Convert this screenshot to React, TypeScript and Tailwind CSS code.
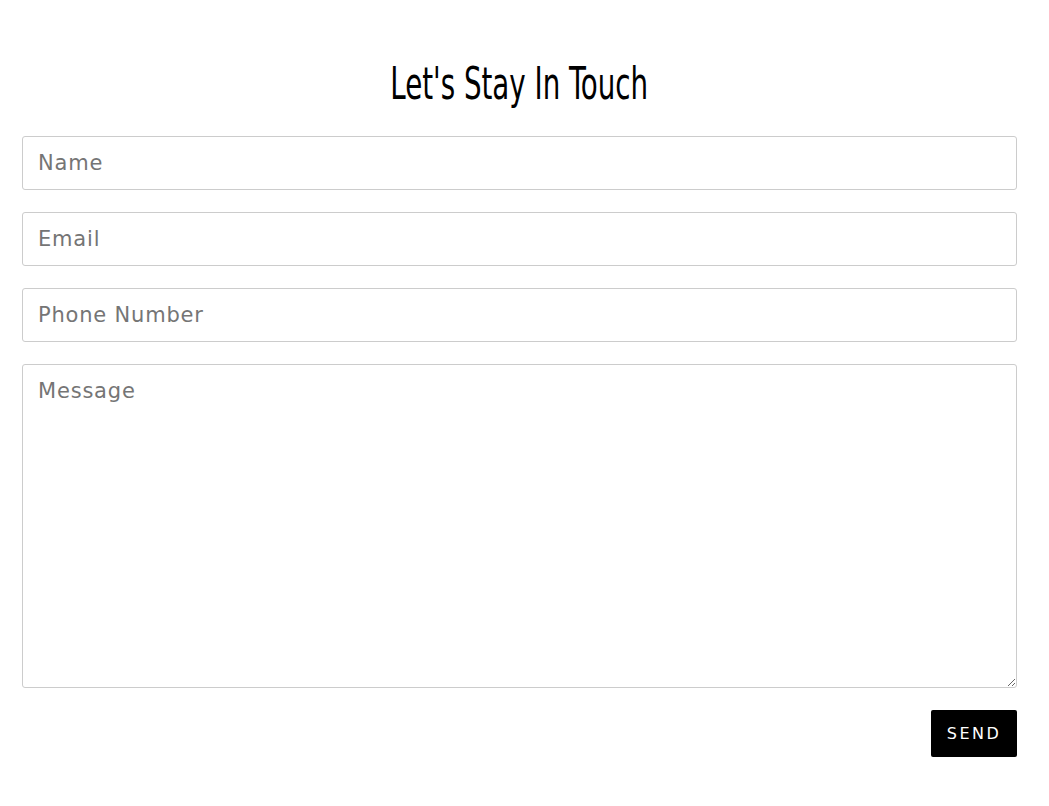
const fieldClass =
  "w-full h-[54px] rounded-[3px] border border-[#cccccc] bg-white px-[15px] text-[21px] tracking-[0.8px] text-[#333] placeholder:text-[#757575] outline-none";

export default function App() {
  return (
    <section className="min-h-[806px] bg-white pl-[22px] pr-[32px] pt-[60px]" style={{ fontFamily: "'DejaVu Sans', sans-serif" }}>
      <div className="mb-[28px] flex justify-center">
        <h2
          className="inline-block scale-x-[0.7] text-[44px] leading-[48px] text-black"
          style={{ fontFamily: "'DejaVu Sans Condensed', 'Liberation Sans Narrow', sans-serif" }}
        >
          Let's Stay In Touch
        </h2>
      </div>

      <form className="flex flex-col gap-[22px]" onSubmit={(e) => e.preventDefault()}>
        <input className={fieldClass} placeholder="Name" />
        <input className={fieldClass} placeholder="Email" />
        <input className={fieldClass} placeholder="Phone Number" />
        <textarea
          className="h-[324px] w-full rounded-[3px] border border-[#cccccc] bg-white px-[15px] py-[11px] text-[21px] tracking-[0.8px] text-[#333] placeholder:text-[#757575] outline-none"
          placeholder="Message"
        />
        <div className="flex justify-end">
          <button className="h-[47px] w-[86px] rounded-[2px] bg-black text-[16px] tracking-[2.5px] text-white">
            SEND
          </button>
        </div>
      </form>
    </section>
  );
}
